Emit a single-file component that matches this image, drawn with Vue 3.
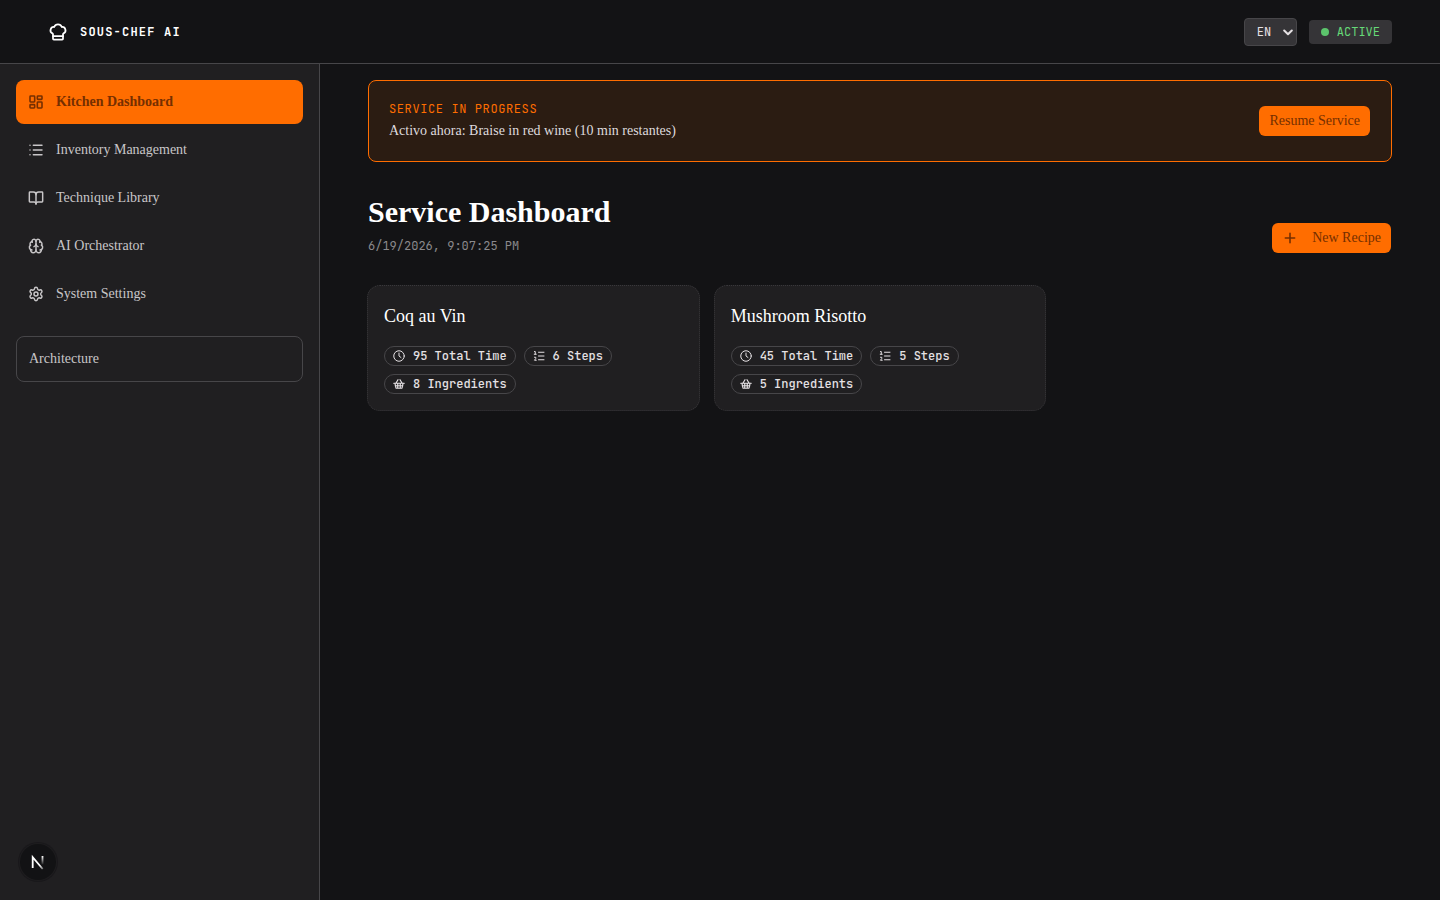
<script setup>
const nav = [
  { label: 'Kitchen Dashboard', icon: 'dashboard', active: true },
  { label: 'Inventory Management', icon: 'list' },
  { label: 'Technique Library', icon: 'book' },
  { label: 'AI Orchestrator', icon: 'brain' },
  { label: 'System Settings', icon: 'gear' },
]
const recipes = [
  { name: 'Coq au Vin', time: 95, steps: 6, ingredients: 8 },
  { name: 'Mushroom Risotto', time: 45, steps: 5, ingredients: 5 },
]
</script>

<template>
  <div class="app">
    <header class="topbar">
      <div class="brand">
        <svg class="i20" viewBox="0 0 24 24"><path d="M17 21a1 1 0 0 0 1-1v-5.35c0-.457.316-.844.727-1.041a4 4 0 0 0-2.134-7.589 5 5 0 0 0-9.186 0 4 4 0 0 0-2.134 7.588c.411.198.727.585.727 1.041V20a1 1 0 0 0 1 1Z" /><path d="M6 17h12" /></svg>
        <span>SOUS-CHEF AI</span>
      </div>
      <div class="tools">
        <div class="select"><span>EN</span><svg viewBox="0 0 10 8"><path d="M1.2 2.500 5 6.300l3.800-3.800" /></svg></div>
        <div class="status"><i></i><span>ACTIVE</span></div>
      </div>
    </header>
    <div class="body">
      <aside class="sidebar">
        <nav>
          <a v-for="n in nav" :key="n.label" :class="{ active: n.active }">
            <svg v-if="n.icon === 'dashboard'" class="i16" viewBox="0 0 24 24"><rect x="3" y="3" width="7" height="9" rx="1" /><rect x="14" y="3" width="7" height="5" rx="1" /><rect x="14" y="12" width="7" height="9" rx="1" /><rect x="3" y="16" width="7" height="5" rx="1" /></svg>
            <svg v-else-if="n.icon === 'list'" class="i16" viewBox="0 0 24 24"><path d="M3 5h.01M3 12h.01M3 19h.01M8 5h13M8 12h13M8 19h13" /></svg>
            <svg v-else-if="n.icon === 'book'" class="i16" viewBox="0 0 24 24"><path d="M12 7v14" /><path d="M3 18a1 1 0 0 1-1-1V4a1 1 0 0 1 1-1h5a4 4 0 0 1 4 4 4 4 0 0 1 4-4h5a1 1 0 0 1 1 1v13a1 1 0 0 1-1 1h-6a3 3 0 0 0-3 3 3 3 0 0 0-3-3z" /></svg>
            <svg v-else-if="n.icon === 'brain'" class="i16" viewBox="0 0 24 24"><path d="M12 18V5" /><path d="M15 13a4.170 4.170 0 0 1-3-4 4.170 4.170 0 0 1-3 4" /><path d="M17.598 6.500A3 3 0 1 0 12 5a3 3 0 1 0-5.598 1.500" /><path d="M17.997 5.125a4 4 0 0 1 2.526 5.770" /><path d="M18 18a4 4 0 0 0 2-7.464" /><path d="M19.967 17.483A4 4 0 1 1 12 18a4 4 0 1 1-7.967-.517" /><path d="M6 18a4 4 0 0 1-2-7.464" /><path d="M6.003 5.125a4 4 0 0 0-2.526 5.770" /></svg>
            <svg v-else class="i16" viewBox="0 0 24 24"><path d="M9.671 4.136a2.340 2.340 0 0 1 4.659 0 2.340 2.340 0 0 0 3.319 1.915 2.340 2.340 0 0 1 2.330 4.033 2.340 2.340 0 0 0 0 3.831 2.340 2.340 0 0 1-2.330 4.033 2.340 2.340 0 0 0-3.319 1.915 2.340 2.340 0 0 1-4.659 0 2.340 2.340 0 0 0-3.320-1.915 2.340 2.340 0 0 1-2.330-4.033 2.340 2.340 0 0 0 0-3.831A2.340 2.340 0 0 1 6.350 6.051a2.340 2.340 0 0 0 3.319-1.915" /><circle cx="12" cy="12" r="3" /></svg>
            <span>{{ n.label }}</span>
          </a>
        </nav>
        <div class="arch">Architecture</div>
      </aside>
      <main>
        <section class="banner">
          <div>
            <div class="eyebrow">SERVICE IN PROGRESS</div>
            <p>Activo ahora: Braise in red wine (10 min restantes)</p>
          </div>
          <button>Resume Service</button>
        </section>
        <section class="heading">
          <div>
            <h1>Service Dashboard</h1>
            <div class="date">6/19/2026, 9:07:25 PM</div>
          </div>
          <button class="new"><svg class="i16" viewBox="0 0 24 24"><path d="M5 12h14M12 5v14" /></svg><span>New Recipe</span></button>
        </section>
        <section class="cards">
          <article v-for="r in recipes" :key="r.name">
            <h2>{{ r.name }}</h2>
            <div class="chips">
              <span class="chip"><svg class="i12" viewBox="0 0 24 24"><circle cx="12" cy="12" r="10.500" /><path d="M12 6v6l4 3" /></svg>{{ r.time }} Total Time</span>
              <span class="chip"><svg class="i12" viewBox="0 0 24 24"><path d="M11 4.500h11M11 12h11M11 19.500h11" /><path d="M3 3h1.500v5M2.500 8.500h4M3 14.500h2.500v2.500L3 20.500h3.500" /></svg>{{ r.steps }} Steps</span>
              <span class="chip"><svg class="i12 basket" viewBox="0 0 24 24"><path d="m6 10 4-6.500M18 10l-4-6.500M1.500 10.500h21M4 11l2 9.500h12L20 11M4.500 15.500h15M9.500 11v9.500M14.500 11v9.500" /></svg>{{ r.ingredients }} Ingredients</span>
            </div>
          </article>
        </section>
      </main>
    </div>
    <div class="badge">
      <svg viewBox="0 0 36 36">
        <defs>
          <linearGradient id="diag" x1="18" y1="18" x2="24" y2="25" gradientUnits="userSpaceOnUse"><stop stop-color="#fff" /><stop offset=".4" stop-color="#fff" /><stop offset="1" stop-color="#fff" stop-opacity=".3" /></linearGradient>
          <linearGradient id="stem" x1="0" y1="12" x2="0" y2="21" gradientUnits="userSpaceOnUse"><stop stop-color="#fff" /><stop offset="1" stop-color="#fff" stop-opacity="0" /></linearGradient>
        </defs>
        <path d="M12.700 24V13.200L22.700 25" stroke="url(#diag)" /><path d="M22.500 12V20.500" stroke="url(#stem)" />
      </svg>
    </div>
  </div>
</template>

<style>
body { background: #131315; }
</style>

<style scoped>
* { box-sizing: border-box; }
.app { height: 900px; background: #131315; color: #c8c6c8; font: 14px/20px "Liberation Serif", serif; display: flex; flex-direction: column; position: relative; overflow: hidden; }
svg { fill: none; stroke: currentColor; stroke-width: 2; stroke-linecap: round; stroke-linejoin: round; flex: none; display: block; }
.i20 { width: 20px; height: 20px; stroke-width: 2.100; }
.i16 { width: 16px; height: 16px; stroke-width: 2.200; }
.i12 { width: 12px; height: 12px; }
.basket { stroke-width: 2.400; }
.topbar { height: 64px; flex: none; border-bottom: 1px solid #474649; padding: 0 48px; display: flex; align-items: center; justify-content: space-between; }
.brand, .tools, .status, .select, .eyebrow, .date, .chip { font-family: "JetBrains Mono", "DejaVu Sans Mono", monospace; font-size: 12px; line-height: 16px; }
.brand { display: flex; align-items: center; gap: 12px; color: #fff; font-weight: 700; letter-spacing: 1.200px; }
.tools { display: flex; align-items: center; gap: 12px; }
.select { width: 53px; height: 28px; border: 1px solid #474649; border-radius: 4px; background: #353437; color: #e5e1e4; display: flex; align-items: center; padding: 0 3px 0 12px; justify-content: space-between; }
.select svg { width: 10px; height: 8px; }
.status { height: 24px; padding: 0 12px; border-radius: 4px; background: #353437; color: #66d978; display: flex; align-items: center; gap: 8px; }
.status i { width: 8px; height: 8px; border-radius: 50%; background: #5cc46c; }
.body { flex: 1; display: flex; min-height: 0; }
.sidebar { width: 320px; flex: none; background: #201f21; border-right: 1px solid #474649; padding: 16px; }
nav { display: flex; flex-direction: column; gap: 4px; }
nav a { height: 44px; padding: 0 12px; border-radius: 8px; display: flex; align-items: center; gap: 12px; }
nav a.active { background: #ff6d00; color: #752f00; font-weight: 700; }
nav a.active svg, .new svg { stroke-width: 2.400; }
.arch { margin-top: 20px; height: 46px; border: 1px solid #474649; border-radius: 8px; padding: 12px; }
main { flex: 1; min-width: 0; padding: 16px 48px; }
.banner { height: 82px; border: 1px solid #ff6d00; border-radius: 8px; background: #2b1c12; padding: 20px 21px 20px 20px; display: flex; align-items: center; justify-content: space-between; color: #dedadd; }
.eyebrow { color: #ff6d00; letter-spacing: .6px; margin-bottom: 4px; }
p { margin: 0; }
button { height: 30px; padding: 0 10px; border: 0; border-radius: 6px; background: #ff6d00; color: #752f00; font: inherit; }
.heading { margin-top: 32px; height: 59px; display: flex; justify-content: space-between; align-items: flex-start; }
h1 { margin: 0 0 8px; font-size: 30px; line-height: 36px; font-weight: 700; color: #fff; }
.date { color: #8a898c; }
.new { align-self: flex-end; display: flex; align-items: center; gap: 14px; margin-right: 1px; }
.cards { margin: 32px -1px 0; display: grid; grid-template-columns: repeat(3, minmax(0, 1fr)); gap: 14px; }
article { background: #201f21; border: 1px dotted #39383b; border-radius: 13px; height: 126px; padding: 16px; }
h2 { margin: 0; font-size: 18px; line-height: 28px; font-weight: 400; color: #fff; }
.chips { margin-top: 16px; display: flex; flex-wrap: wrap; gap: 8px; }
.chip { height: 20px; border: 1px solid #474649; border-radius: 10px; padding: 0 8px; display: flex; align-items: center; gap: 8px; color: #e5e1e4; font-weight: 500; }
.badge { position: absolute; left: 20px; top: 844px; width: 36px; height: 36px; border-radius: 50%; background: #121214; box-shadow: 0 0 0 1px #1e1d1f, 0 0 0 2px #19181b; }
.badge svg { width: 36px; height: 36px; stroke-width: 1.800; stroke-linecap: butt; stroke-linejoin: miter; }
</style>
